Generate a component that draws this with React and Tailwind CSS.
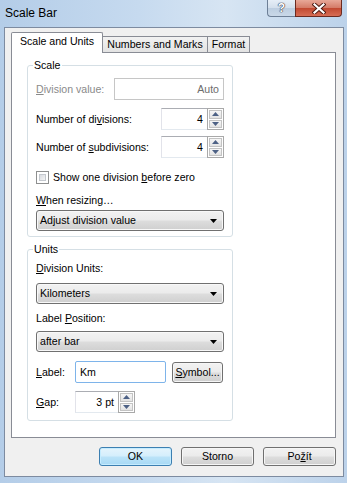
import React from "react";

const btnGrad =
  "bg-[linear-gradient(#f2f2f2_0%,#ebebeb_48%,#dddddd_52%,#cfcfcf_100%)]";

function U({ children }) {
  return <span className="underline underline-offset-[1px]">{children}</span>;
}

function DownArrow() {
  return (
    <svg width="7" height="4" viewBox="0 0 7 4">
      <path d="M0 0h7L3.5 4z" fill="#000" />
    </svg>
  );
}

function Combo({ value }) {
  return (
    <div
      className={`h-[21px] w-full rounded-[3px] border border-[#707070] ${btnGrad} shadow-[inset_0_0_0_1px_#f8f8f8] flex items-center justify-between pl-[3px] pr-[6px]`}
    >
      <span>{value}</span>
      <DownArrow />
    </div>
  );
}

function SpinArrow({ up }) {
  return (
    <svg width="7" height="4" viewBox="0 0 7 4">
      <path d={up ? "M0 4h7L3.5 0z" : "M0 0h7L3.5 4z"} fill="#4d6185" />
    </svg>
  );
}

function Spinner({ value, fieldW }) {
  return (
    <div className="flex h-[22px]">
      <div
        className={`${fieldW} h-full border border-[#abadb3] border-b-[#e3e9ef] border-l-[#e2e3ea] border-r-0 bg-white flex items-center justify-end pr-[4px]`}
      >
        {value}
      </div>
      <div className="w-[17px] h-full flex flex-col border border-[#a9a9a9] bg-white p-[1px] gap-[1px]">
        <div className="flex-1 flex items-center justify-center border border-[#c3c3c3] bg-[linear-gradient(#f6f6f6,#e3e3e3)]">
          <SpinArrow up />
        </div>
        <div className="flex-1 flex items-center justify-center border border-[#c3c3c3] bg-[linear-gradient(#f6f6f6,#e3e3e3)]">
          <SpinArrow />
        </div>
      </div>
    </div>
  );
}

function Group({ title, children }) {
  return (
    <div className="relative w-[206px] h-[172px] rounded-[3px] border border-[#d5dfe5] px-[8px]">
      <span className="absolute left-[5px] top-[-7px] bg-white px-[1px] leading-[13px]">
        {title}
      </span>
      {children}
    </div>
  );
}

function Button({ children, primary }) {
  return (
    <div
      className={`w-[73px] h-[19px] rounded-[3px] border flex items-center justify-center ${
        primary
          ? "border-[#3c7fb1] bg-[linear-gradient(#e5f4fc_0%,#d4eefc_48%,#bbe3f8_52%,#a7d9f5_100%)] shadow-[inset_0_0_0_1px_#c5ecff]"
          : `border-[#707070] ${btnGrad} shadow-[inset_0_0_0_1px_#f6f6f6]`
      }`}
    >
      {children}
    </div>
  );
}

export default function App() {
  return (
    <div className="w-[347px] h-[483px] overflow-hidden bg-[linear-gradient(90deg,#b4cde8_0%,#c6daef_40%,#d7e5f3_65%,#bcd2ea_100%)] font-['Liberation_Sans',Arial,sans-serif] text-[10.6px] text-black leading-[13px]">
      {/* title bar */}
      <div className="h-[27px] flex items-start justify-between">
        <div className="pl-[5px] pt-[6px] text-[12px] leading-[14px]">Scale Bar</div>
        <div className="flex mr-[5px]">
          <div className="w-[28px] h-[17px] rounded-bl-[4px] border border-r-0 border-t-0 border-[#6d7f96] bg-[linear-gradient(#e6eef7_0%,#d3dfec_50%,#bccde0_51%,#c9d8e8_100%)] flex items-center justify-center">
            <span className="font-bold text-[12px] leading-[12px] text-white [text-shadow:0_0_1px_#334,0_0_1px_#334,0_0_1px_#334]">
              ?
            </span>
          </div>
          <div className="w-[47px] h-[17px] rounded-br-[4px] border border-t-0 border-[#6b2a20] bg-[linear-gradient(#e8a898_0%,#d47a66_50%,#c14830_51%,#d76d55_100%)] flex items-center justify-center">
            <svg width="14" height="11" viewBox="0 0 14 11">
              <path d="M2.5 1.5l9 8M11.5 1.5l-9 8" stroke="#4a1810" strokeWidth="4" strokeLinecap="square" />
              <path d="M2.5 1.5l9 8M11.5 1.5l-9 8" stroke="#fff" strokeWidth="2.2" strokeLinecap="square" />
            </svg>
          </div>
        </div>
      </div>

      {/* client area */}
      <div className="ml-[4px] w-[340px] h-[450px] border border-[#7d8ba0] bg-[#f0f0f0] pt-[4px] pl-[6px]">
        {/* tabs */}
        <div className="flex items-end h-[20px]">
          <div className="relative z-10 mb-[-1px] h-[21px] w-[92px] bg-white border border-b-0 border-[#898c95] rounded-t-[2px] flex items-center justify-center pb-[3px]">
            Scale and Units
          </div>
          <div className="h-[16px] w-[105px] border border-b-0 border-l-0 border-[#898c95] bg-[linear-gradient(#f2f2f2,#e3e3e3)] flex items-center justify-center">
            Numbers and Marks
          </div>
          <div className="h-[16px] w-[42px] border border-b-0 border-l-0 border-[#898c95] bg-[linear-gradient(#f2f2f2,#e3e3e3)] flex items-center justify-center">
            Format
          </div>
        </div>

        {/* panel */}
        <div className="w-[325px] h-[386px] border border-[#898c95] bg-white pl-[15px] pt-[12px]">
          <Group title="Scale">
            <div className="mt-[12px] h-[22px] flex items-center justify-between">
              <span className="text-[#8a8a8a]">
                <U>D</U>ivision value:
              </span>
              <div className="w-[110px] h-full border border-[#c6c6c6] bg-white flex items-center justify-end pr-[4px] text-[#6d6d6d]">
                Auto
              </div>
            </div>
            <div className="mt-[8px] h-[22px] flex items-center justify-between">
              <span>
                Number of di<U>v</U>isions:
              </span>
              <Spinner value="4" fieldW="w-[46px]" />
            </div>
            <div className="mt-[6px] h-[22px] flex items-center justify-between">
              <span>
                Number of <U>s</U>ubdivisions:
              </span>
              <Spinner value="4" fieldW="w-[46px]" />
            </div>
            <div className="mt-[13px] h-[13px] flex items-center gap-[4px]">
              <div className="w-[13px] h-[13px] border border-[#8e8f8f] bg-white p-[2px]">
                <div className="w-full h-full border border-[#c4c8ce] bg-[linear-gradient(135deg,#d9dce1,#f4f4f4)]" />
              </div>
              <span>
                Show one division <U>b</U>efore zero
              </span>
            </div>
            <div className="mt-[10px]">
              <U>W</U>hen resizing…
            </div>
            <div className="mt-[3px]">
              <Combo value="Adjust division value" />
            </div>
          </Group>

          <div className="h-[12px]" />

          <Group title="Units">
            <div className="mt-[12px]">
              <U>D</U>ivision Units:
            </div>
            <div className="mt-[8px]">
              <Combo value="Kilometers" />
            </div>
            <div className="mt-[8px]">
              Label <U>P</U>osition:
            </div>
            <div className="mt-[6px]">
              <Combo value="after bar" />
            </div>
            <div className="mt-[9px] h-[22px] flex items-center">
              <span className="w-[39px]">
                <U>L</U>abel:
              </span>
              <div className="w-[91px] h-full rounded-[2px] border border-[#7eb4ea] bg-white flex items-center pl-[4px]">
                Km
              </div>
              <div className="ml-[6px]">
                <div
                  className={`w-[51px] h-[21px] rounded-[3px] border border-[#707070] ${btnGrad} shadow-[inset_0_0_0_1px_#f6f6f6] flex items-center justify-center`}
                >
                  <span>
                    <U>S</U>ymbol...
                  </span>
                </div>
              </div>
            </div>
            <div className="mt-[8px] h-[22px] flex items-center">
              <span className="w-[39px]">
                <U>G</U>ap:
              </span>
              <Spinner value="3 pt" fieldW="w-[43px]" />
            </div>
          </Group>
        </div>

        {/* buttons */}
        <div className="mt-[9px] w-[325px] flex justify-end gap-[9px]">
          <Button primary>OK</Button>
          <Button>Storno</Button>
          <Button>
            Po<U>ž</U>ít
          </Button>
        </div>
      </div>
    </div>
  );
}
